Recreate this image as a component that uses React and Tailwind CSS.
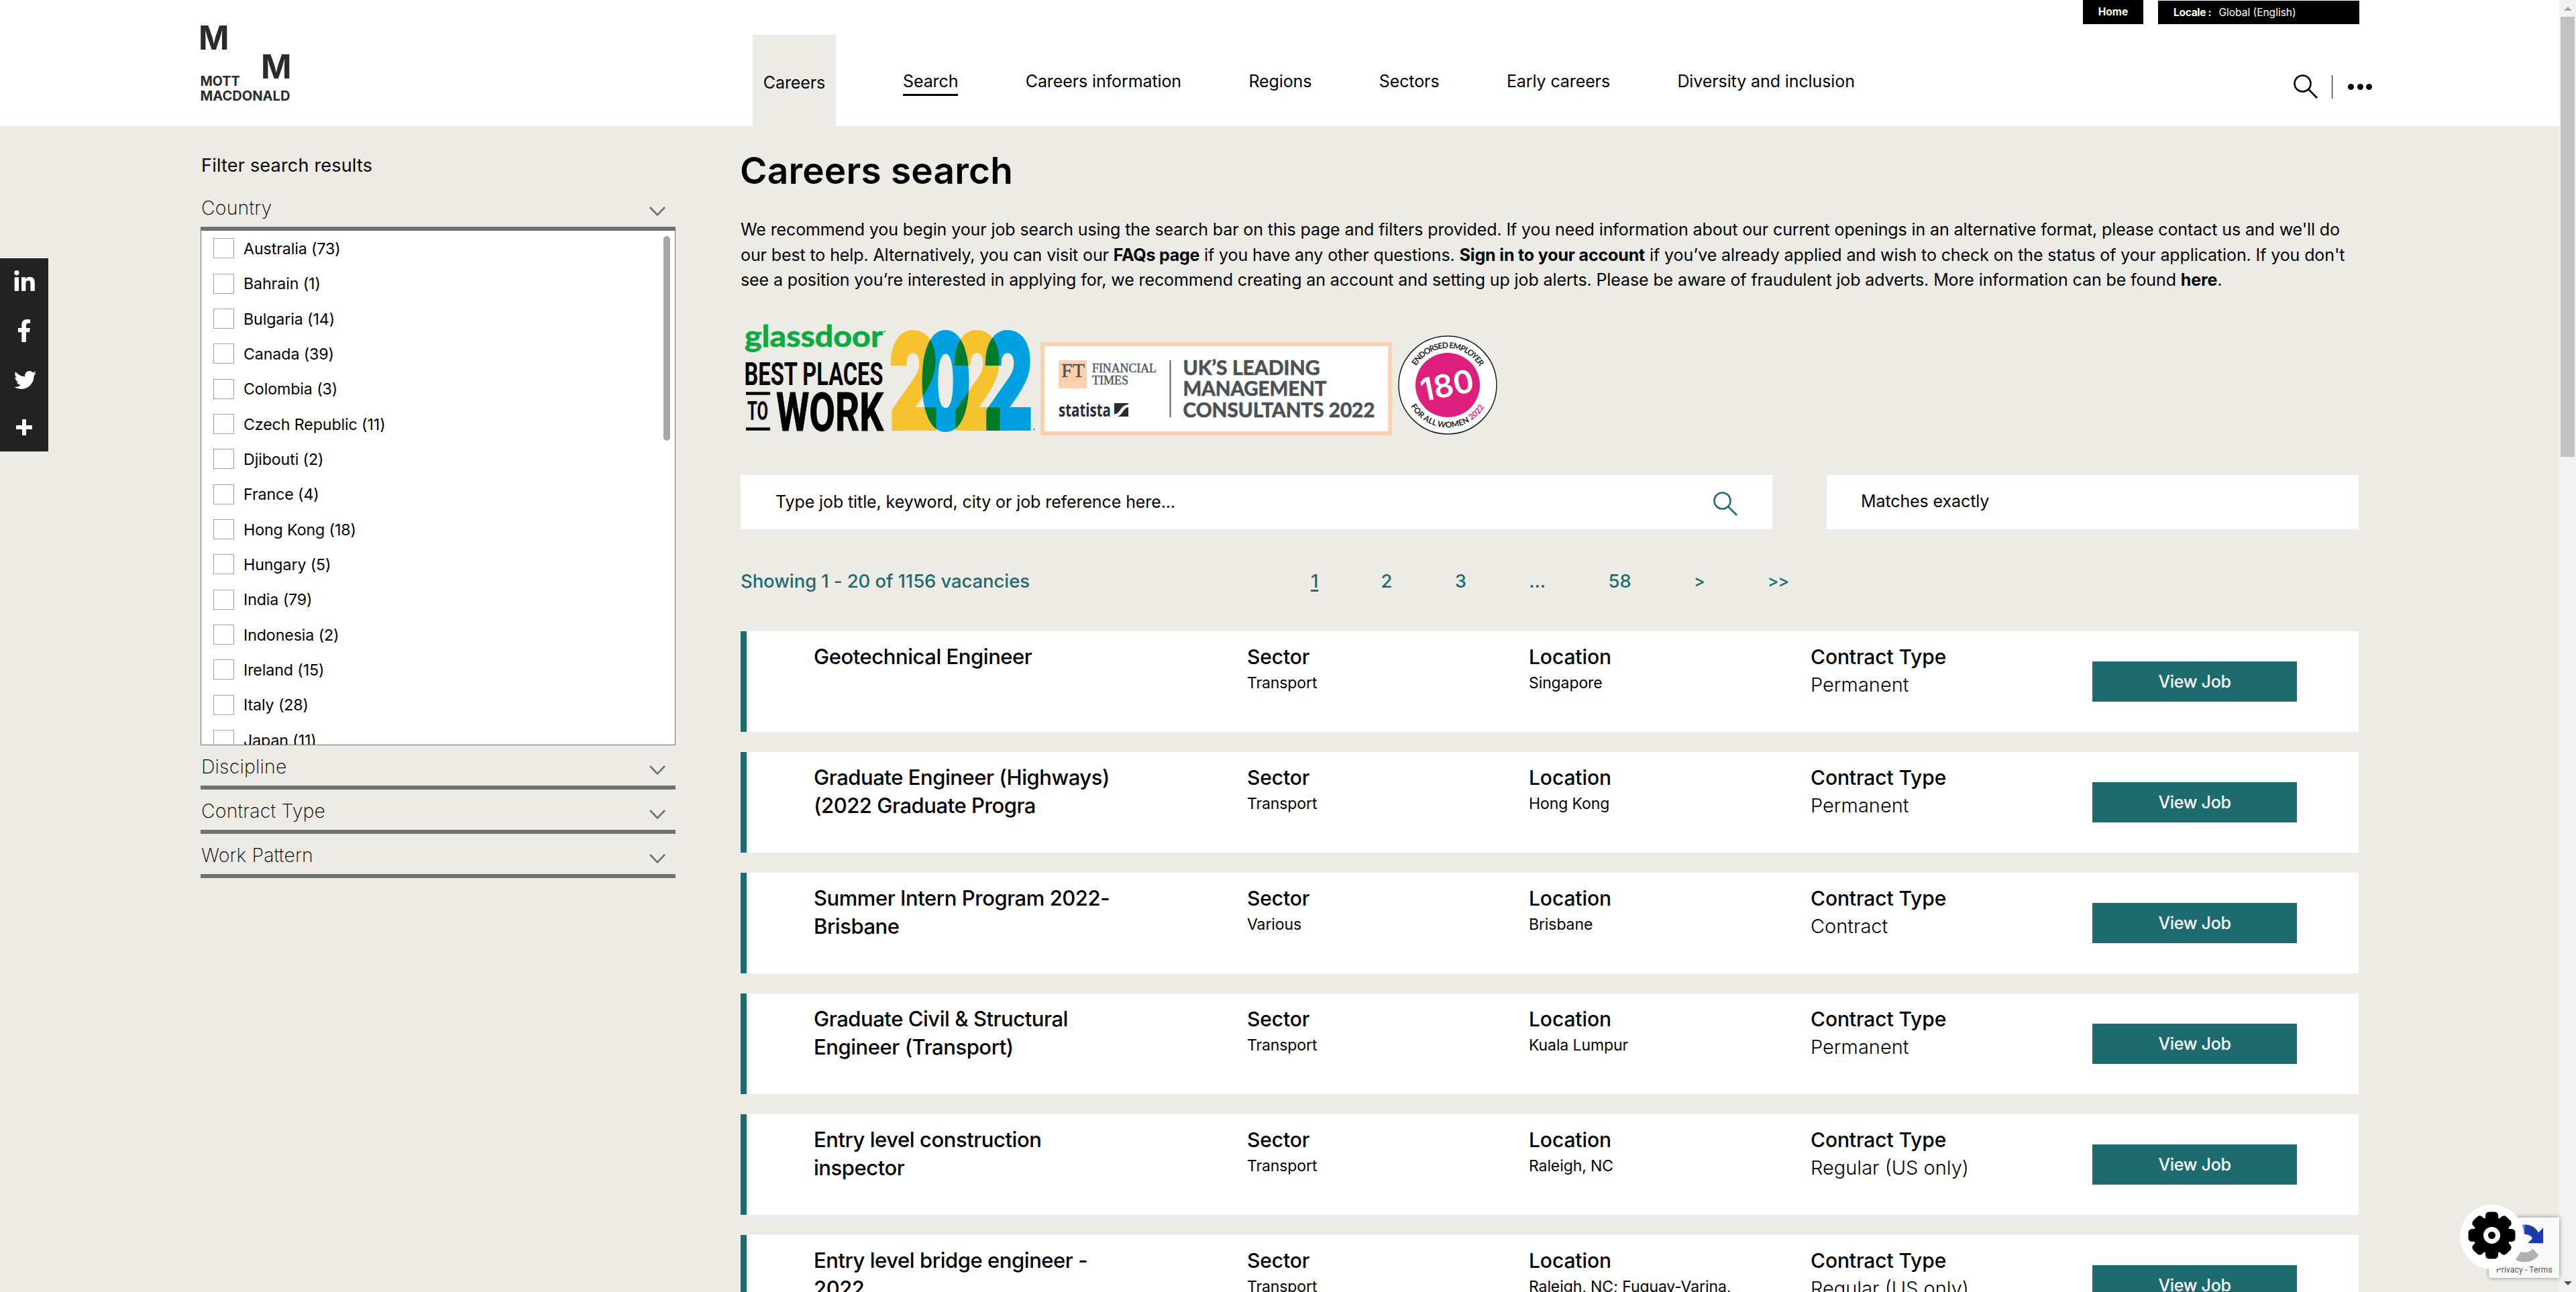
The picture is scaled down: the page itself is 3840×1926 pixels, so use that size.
import { FaFacebookF, FaLinkedinIn, FaTwitter } from "react-icons/fa";

const countries = [
  "Australia (73)",
  "Bahrain (1)",
  "Bulgaria (14)",
  "Canada (39)",
  "Colombia (3)",
  "Czech Republic (11)",
  "Djibouti (2)",
  "France (4)",
  "Hong Kong (18)",
  "Hungary (5)",
  "India (79)",
  "Indonesia (2)",
  "Ireland (15)",
  "Italy (28)",
  "Japan (11)",
];

const navItems = ["Careers information", "Regions", "Sectors", "Early careers", "Diversity and inclusion"];

const jobs = [
  { title: ["Geotechnical Engineer"], sector: "Transport", location: "Singapore", contract: "Permanent" },
  { title: ["Graduate Engineer (Highways)", "(2022 Graduate Progra"], sector: "Transport", location: "Hong Kong", contract: "Permanent" },
  { title: ["Summer Intern Program 2022-", "Brisbane"], sector: "Various", location: "Brisbane", contract: "Contract" },
  { title: ["Graduate Civil & Structural", "Engineer (Transport)"], sector: "Transport", location: "Kuala Lumpur", contract: "Permanent" },
  { title: ["Entry level construction", "inspector"], sector: "Transport", location: "Raleigh, NC", contract: "Regular (US only)" },
  { title: ["Entry level bridge engineer -", "2022"], sector: "Transport", location: "Raleigh, NC; Fuquay-Varina,", contract: "Regular (US only)" },
];

function SearchIcon({ className }) {
  return (
    <svg viewBox="0 0 36 36" fill="none" stroke="currentColor" strokeWidth="2.6" className={className}>
      <circle cx="13.5" cy="13.5" r="12" />
      <path d="M22 22 L35 35" />
    </svg>
  );
}

function Logo() {
  return (
    <svg viewBox="0 0 140 120" className="mt-[36px] h-[120px] w-[140px] overflow-visible font-['Inter',sans-serif] font-bold" fill="#2b2b2b">
      <text x="-3" y="37.5" fontSize="49.5" textLength="45.5" lengthAdjust="spacingAndGlyphs">M</text>
      <text x="90" y="81" fontSize="49.5" textLength="45.5" lengthAdjust="spacingAndGlyphs">M</text>
      <text x="-0.5" y="92" fontSize="19.5" textLength="59" lengthAdjust="spacingAndGlyphs">MOTT</text>
      <text x="-0.5" y="114" fontSize="19.5" textLength="134" lengthAdjust="spacingAndGlyphs">MACDONALD</text>
    </svg>
  );
}

function Header() {
  return (
    <header className="flex h-[188px] bg-white pl-[299px] pr-[279px]">
      <Logo />
      <nav className="ml-[683px] flex items-center gap-[100px] whitespace-nowrap pt-[52px] text-[25px] leading-[36px] tracking-[-0.1px]">
        <a className="flex h-[136px] w-[124px] items-center justify-center bg-[#ecebe5] pt-[5px]">Careers</a>
        <a className="-mt-px border-b-[3px] border-black pb-px pt-[6px]">Search</a>
        {navItems.map((label) => (
          <a key={label} className="pl-[0.4px] pt-px">{label}</a>
        ))}
      </nav>
      <div className="ml-auto flex flex-col items-end">
        <div className="flex gap-[22px] pr-[19px] text-[15.5px] leading-[35px] text-white">
          <div className="h-[36px] w-[90px] bg-black text-center font-bold">Home</div>
          <div className="mt-px flex h-[35px] w-[300px] bg-black pl-[23px]">
            <b className="tracking-[-0.3px]">Locale :</b>
            <span className="ml-[11px]">Global (English)</span>
          </div>
        </div>
        <div className="mt-[75px] flex items-center">
          <SearchIcon className="h-[36px] w-[36px]" />
          <div className="ml-[21px] h-[35px] w-px bg-black" />
          <div className="ml-[23px] flex gap-[4.5px]">
            <i className="h-[9px] w-[9px] rounded-full bg-black" />
            <i className="h-[9px] w-[9px] rounded-full bg-black" />
            <i className="h-[9px] w-[9px] rounded-full bg-black" />
          </div>
        </div>
      </div>
    </header>
  );
}

function FilterHeader({ label }) {
  return (
    <div className="flex h-[66px] items-center justify-between border-b-[6px] border-[#6f7070] pr-[15px]">
      <span className="pl-px pt-[4px] text-[28.5px] font-extralight leading-[40px] tracking-[0.15px]">{label}</span>
      <svg viewBox="0 0 24 14" className="mt-[13px] h-[14px] w-[24px]" fill="none" stroke="#6f7070" strokeWidth="2.6">
        <path d="M1 1 L12 12.4 L23 1" />
      </svg>
    </div>
  );
}

function Sidebar() {
  return (
    <aside className="w-[708px] shrink-0 pt-[39px]">
      <h2 className="mb-[11px] pl-px text-[27px] leading-[40px] tracking-[0.2px]">Filter search results</h2>
      <FilterHeader label="Country" />
      <div className="flex h-[767px] justify-between overflow-hidden border border-t-0 border-[#6f7070] bg-white">
        <ul className="pl-[18px]">
          {countries.map((c) => (
            <li key={c} className="flex h-[52.36px] items-center gap-[14px] text-[23.2px] tracking-[-0.1px]">
              <span className="h-[30px] w-[31px] border border-[#a0a0a0]" />
              <span className="pt-[2px]">{c}</span>
            </li>
          ))}
        </ul>
        <div className="mr-[7px] mt-[8px] h-[305px] w-[10px] rounded-full bg-[#a6a6a6]" />
      </div>
      <FilterHeader label="Discipline" />
      <FilterHeader label="Contract Type" />
      <FilterHeader label="Work Pattern" />
    </aside>
  );
}

function GlassdoorAward() {
  return (
    <svg viewBox="4 0 447 180" className="h-[180px] w-[447px] font-['Roboto',sans-serif]">
      <text x="10" y="37" fontSize="43" fill="#0caa41" stroke="#0caa41" strokeWidth="0.8" className="font-['Lato',sans-serif] font-bold" textLength="206" lengthAdjust="spacingAndGlyphs">glassdoor</text>
      <circle cx="219" cy="14" r="1.2" fill="#0caa41" />
      <text x="9.5" y="94" fontSize="49" className="font-bold" textLength="207" lengthAdjust="spacingAndGlyphs">BEST PLACES</text>
      <path d="M12 106.5h36M12 159.5h36" stroke="#000" strokeWidth="4.4" />
      <text x="14" y="146" fontSize="38" className="font-bold" textLength="31" lengthAdjust="spacingAndGlyphs">TO</text>
      <text x="57" y="161.5" fontSize="80" stroke="#000" strokeWidth="1" className="font-bold" textLength="160" lengthAdjust="spacingAndGlyphs">WORK</text>
      <g className="isolate font-['Inter',sans-serif] font-black" fontSize="198" strokeWidth="4">
        <text x="225" y="160" fill="#f6c22e" stroke="#f6c22e" textLength="74" lengthAdjust="spacingAndGlyphs">2</text>
        <text x="320" y="160" fill="#f6c22e" stroke="#f6c22e" textLength="74" lengthAdjust="spacingAndGlyphs">2</text>
        <text x="272" y="160" fill="#00a1e0" stroke="#00a1e0" className="mix-blend-multiply" textLength="75" lengthAdjust="spacingAndGlyphs">0</text>
        <text x="366" y="160" fill="#00a1e0" stroke="#00a1e0" className="mix-blend-multiply" textLength="74" lengthAdjust="spacingAndGlyphs">2</text>
      </g>
      <circle cx="441.5" cy="160" r="1.2" fill="#00a1e0" />
    </svg>
  );
}

function FinancialTimesAward() {
  return (
    <svg viewBox="0 0 524 139" className="mt-[30px] h-[139px] w-[524px]">
      <rect x="3" y="3" width="518" height="133" fill="#fff" stroke="#fdd0b0" strokeWidth="6" />
      <rect x="27" y="27" width="42" height="42" fill="#fdd0b0" />
      <g fill="#4a5256" stroke="#4a5256" strokeWidth="0.4" className="font-['Liberation_Serif',serif]">
        <text x="31" y="52" fontSize="30" textLength="35" lengthAdjust="spacingAndGlyphs">FT</text>
        <text x="77" y="45" fontSize="19.5" textLength="96" lengthAdjust="spacingAndGlyphs">FINANCIAL</text>
        <text x="77" y="63" fontSize="19.5" textLength="54" lengthAdjust="spacingAndGlyphs">TIMES</text>
      </g>
      <text x="27" y="111" fontSize="26" fill="#262c3a" className="font-['Open_Sans',sans-serif] font-bold" textLength="78" lengthAdjust="spacingAndGlyphs">statista</text>
      <rect x="110" y="91" width="21" height="20" fill="#262c3a" />
      <path d="M110 107.5 C120 107 118 94 131 93 V97 C123 98 122 110 114 111 H110 Z" fill="#fff" />
      <path d="M193.5 27 V112" stroke="#4a5256" strokeWidth="1.8" />
      <g fill="#4a5256" stroke="#4a5256" strokeWidth="0.7" fontSize="29.5" className="font-['Lato',sans-serif] font-bold">
        <text x="212.5" y="48.5" textLength="204" lengthAdjust="spacingAndGlyphs">UK’S LEADING</text>
        <text x="212.5" y="80" textLength="214" lengthAdjust="spacingAndGlyphs">MANAGEMENT</text>
        <text x="212.5" y="111.5" textLength="286" lengthAdjust="spacingAndGlyphs">CONSULTANTS 2022</text>
      </g>
    </svg>
  );
}

function EndorsedBadge() {
  return (
    <svg viewBox="-74 -74 148 148" className="ml-[9px] mt-[20px] h-[148px] w-[148px] font-['Lato',sans-serif]">
      <defs>
        <path id="badge-top" d="M-47.2 -28.5 A55 55 0 0 1 47.6 -27.5" />
        <path id="badge-bottom" d="M-55 31.5 A63.5 63.5 0 0 0 57.5 27" />
      </defs>
      <circle r="73" fill="#fff" stroke="#1e1e1e" strokeWidth="1.5" />
      <circle r="48" fill="#df1f7d" />
      <text transform="rotate(-11)" x="-41" y="17" fontSize="47" fill="#fff" className="font-['Inter',sans-serif] font-semibold" textLength="80" lengthAdjust="spacingAndGlyphs">180</text>
      <text fontSize="12" className="font-bold" fill="#1e1e1e">
        <textPath href="#badge-top" textLength="114">ENDORSED EMPLOYER</textPath>
      </text>
      <text fontSize="12" className="font-bold" fill="#1e1e1e">
        <textPath href="#badge-bottom" textLength="132">
          FOR ALL WOMEN <tspan fill="#df1f7d">2022</tspan>
        </textPath>
      </text>
    </svg>
  );
}

function Pagination() {
  return (
    <div className="mt-[57px] flex h-[40px] items-center text-[27.5px] font-medium leading-[40px] text-[#1d6b6f]">
      <span className="w-[850px] tracking-[-0.1px]">Showing 1 - 20 of 1156 vacancies</span>
      <div className="flex gap-[93.2px]">
        <span className="underline decoration-[3px] underline-offset-[3px]">1</span>
        <span>2</span>
        <span>3</span>
        <span>...</span>
        <span>58</span>
        <span className="text-[25px]">&gt;</span>
        <span className="text-[25px] tracking-[-1px]">&gt;&gt;</span>
      </div>
    </div>
  );
}

function Field({ label, value, large }) {
  return (
    <div className="whitespace-nowrap">
      <h4 className="text-[30px] font-medium leading-[42px] tracking-[-0.1px]">{label}</h4>
      {large ? (
        <p className="pt-px text-[29px] font-light leading-[40px]">{value}</p>
      ) : (
        <p className="text-[23px] leading-[36px] tracking-[-0.1px]">{value}</p>
      )}
    </div>
  );
}

function JobCard({ job }) {
  return (
    <article className="grid h-[150px] shrink-0 grid-cols-[645px_420px_420px_420px_305px] border-l-[9px] border-[#1d6b6f] bg-white pl-[101px] pt-[17px]">
      <h3 className="-ml-px whitespace-nowrap text-[31px] font-medium leading-[42px] tracking-[-0.45px]">
        {job.title.map((line) => (
          <div key={line}>{line}</div>
        ))}
      </h3>
      <Field label="Sector" value={job.sector} />
      <Field label="Location" value={job.location} />
      <Field label="Contract Type" value={job.contract} large />
      <button className="mt-[28px] h-[60px] bg-[#1d6b6f] pt-px text-[25px] font-medium tracking-[-0.3px] text-white">View Job</button>
    </article>
  );
}

function Main() {
  return (
    <main className="ml-[97px] w-[2412px] shrink-0 pt-[36px]">
      <h1 className="-ml-px text-[55px] font-semibold leading-[60px] tracking-[0.15px]">Careers search</h1>
      <p className="mt-[40px] h-[112px] whitespace-nowrap text-[25px] leading-[37.5px] tracking-[-0.11px]">
        We recommend you begin your job search using the search bar on this page and filters provided. If you need information about our current openings in an alternative format, please contact us and we'll do
        <br />
        our best to help. Alternatively, you can visit our <b className="tracking-[-0.25px]">FAQs page</b> if you have any other questions. <b className="tracking-[-0.15px]">Sign in to your account</b> if you’ve already applied and wish to check on the status of your application. If you don't
        <br />
        see a position you’re interested in applying for, we recommend creating an account and setting up job alerts. Please be aware of fraudulent job adverts. More information can be found <b>here</b>.
      </p>
      <div className="mt-[44px] flex h-[180px]">
        <GlassdoorAward />
        <FinancialTimesAward />
        <EndorsedBadge />
      </div>
      <div className="mt-[48px] flex h-[81px] gap-[81px] text-[25px] tracking-[-0.1px]">
        <div className="flex w-[1538px] items-center justify-between bg-white pl-[52px] pr-[52px]">
          <span className="pt-px">Type job title, keyword, city or job reference here...</span>
          <SearchIcon className="mt-[4px] h-[36px] w-[36px] text-[#1d6b6f]" />
        </div>
        <div className="flex w-[793px] items-center bg-white pb-px pl-[51px]">Matches exactly</div>
      </div>
      <Pagination />
      <div className="mt-[55px] flex flex-col gap-[30px]">
        {jobs.map((job) => (
          <JobCard key={job.title[0]} job={job} />
        ))}
      </div>
    </main>
  );
}

function SocialBar() {
  return (
    <div className="absolute left-0 top-[385px] grid h-[288px] w-[72px] grid-rows-4 place-items-center bg-[#222222] text-white">
      <FaLinkedinIn className="mb-px h-[35px] w-[35px]" />
      <FaFacebookF className="h-[34px] w-[34px]" />
      <FaTwitter className="ml-[3px] mt-[2px] h-[33px] w-[33px]" />
      <svg viewBox="0 0 24 24" className="h-[24px] w-[24px]" stroke="currentColor" strokeWidth="6">
        <path d="M12 0V24M0 12H24" />
      </svg>
    </div>
  );
}

function CornerWidgets() {
  return (
    <div className="absolute right-[25px] top-[1796px] h-[109px] w-[148px] overflow-visible">
      <div className="absolute right-0 top-[19px] h-[90px] w-[105px] rounded-l-[4px] bg-[#f9f9f9] shadow-[0_0_6px_rgba(0,0,0,0.45)]">
        <svg viewBox="0 0 60 60" className="absolute left-[24px] top-[8px] h-[60px] w-[60px]">
          <path d="M25.5 3 C28 2.6 29 2.6 29.3 2.6 V17 C27 17.3 26 18 25.5 18.5 Z" fill="#4a90e8" />
          <path d="M29.3 2.6 C39 2.6 46 7 50 14.6 L57 7.3 V30.3 H34 L41.2 23 C39 19 35 17 29.3 17 Z" fill="#1c3aa9" />
          <path d="M50.3 48 C45 55 38 58.3 29.5 58.3 C21 58.3 14 55 10 48 L20 39 C22 42 25 44 29.5 44 C35 44 38.5 42 41.2 38 Z" fill="#b0b0b0" />
        </svg>
        <p className="absolute left-[11px] top-[69px] whitespace-nowrap font-['Roboto',sans-serif] text-[12px] leading-[18px] tracking-[0.15px] text-[#555]">Privacy - Terms</p>
      </div>
      <svg viewBox="-48 -48 96 96" className="absolute left-0 top-0 h-[96px] w-[96px]">
        <circle r="48" fill="#fff" />
        <g transform="translate(-0.5 -2.5)">
          <circle r="27.5" />
          {[0, 45, 90, 135].map((a) => (
            <rect key={a} x="-9.5" y="-35" width="19" height="70" rx="5.5" transform={`rotate(${a})`} />
          ))}
          <circle r="9" fill="none" stroke="#fff" strokeWidth="7" />
        </g>
      </svg>
    </div>
  );
}

function ScrollBar() {
  return (
    <div className="flex h-[1926px] w-[25px] flex-col items-center justify-between bg-[#f1f1f1] pb-[10px]">
      <div className="flex flex-col items-center">
        <svg viewBox="0 0 12 6" className="mb-[9px] mt-[10px] h-[6px] w-[12px]" fill="#a3a3a3">
          <path d="M0 6 L6 0 L12 6Z" />
        </svg>
        <div className="h-[656px] w-[21px] bg-[#c1c1c1]" />
      </div>
      <svg viewBox="0 0 12 6" className="h-[6px] w-[12px]" fill="#505050">
        <path d="M0 0 L6 6 L12 0Z" />
      </svg>
    </div>
  );
}

export default function App() {
  return (
    <div className="relative flex h-[1926px] w-[3840px] overflow-hidden bg-[#ecebe5] font-['Inter',sans-serif] text-black">
      <div className="h-[1926px] w-[3815px] overflow-hidden">
        <Header />
        <div className="flex pl-[299px]">
          <Sidebar />
          <Main />
        </div>
      </div>
      <ScrollBar />
      <SocialBar />
      <CornerWidgets />
    </div>
  );
}
